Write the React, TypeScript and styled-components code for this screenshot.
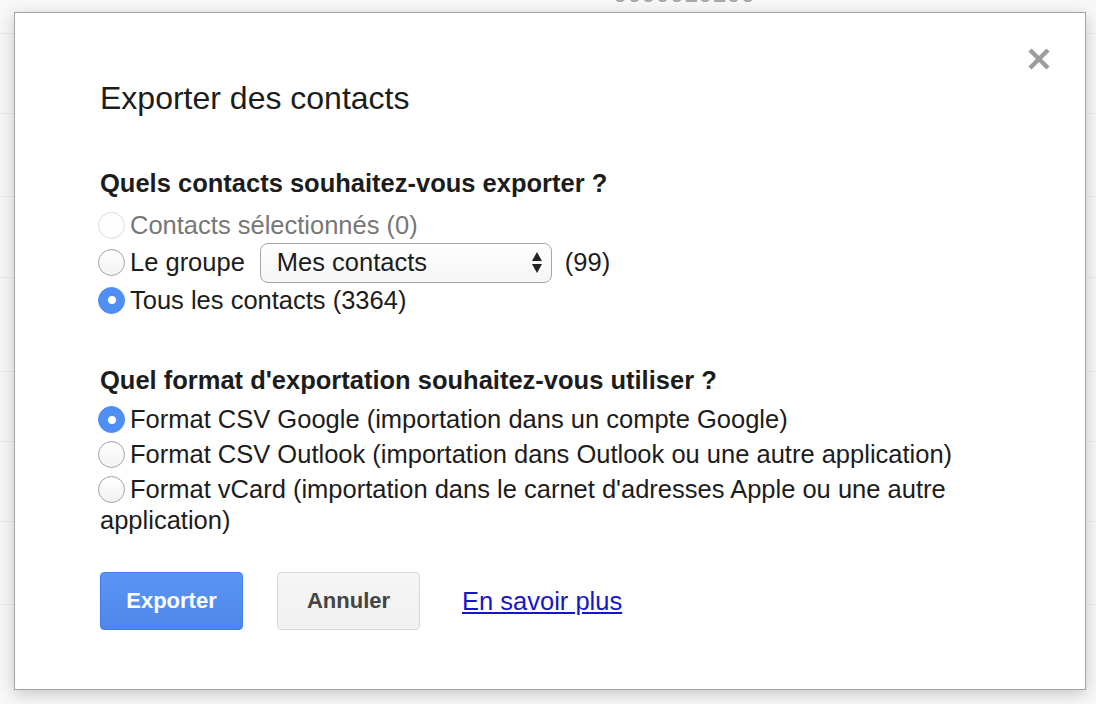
import React from "react";
import styled, {createGlobalStyle} from "styled-components";

const GlobalStyle = createGlobalStyle`
  html, body {
    margin: 0;
    padding: 0;
  }
  body {
    font-family: "Liberation Sans", Arial, Helvetica, sans-serif;
    background: #f8f8f8;
  }
`

// rows of the contact list that sits behind the modal
const behindRows = [
    {h: 80, text: "0000010100"},
    {h: 80}, {h: 83}, {h: 81}, {h: 94}, {h: 70}, {h: 80}, {h: 83}, {h: 140},
]

const groupOptions = [
    {key: "sel", label: "Contacts sélectionnés (0)", disabled: true},
    {key: "group", label: "Le groupe"},
    {key: "all", label: "Tous les contacts (3364)", checked: true},
]

const formatOptions = [
    {key: "google", label: "Format CSV Google (importation dans un compte Google)", checked: true},
    {key: "outlook", label: "Format CSV Outlook (importation dans Outlook ou une autre application)"},
    {key: "vcard", label: "Format vCard (importation dans le carnet d'adresses Apple ou une autre application)"},
]

export default function App() {
    return (
        <Page>
            <GlobalStyle/>
            <ListBehind>
                {behindRows.map((r, i) => (
                    <ListRow key={i} $h={r.h}>{r.text}</ListRow>
                ))}
            </ListBehind>

            <Dialog>
                <Close aria-label="Fermer">
                    <svg width="22" height="22" viewBox="0 0 22 22">
                        <path d="M2 2 L20 20 M20 2 L2 20" stroke="#9d9d9d" strokeWidth="4.5" fill="none"/>
                    </svg>
                </Close>

                <Title>Exporter des contacts</Title>

                <Heading>Quels contacts souhaitez-vous exporter ?</Heading>
                {groupOptions.map((o) => (
                    <Option key={o.key} $pad={6.5} $muted={o.disabled}>
                        <Radio $checked={o.checked} $disabled={o.disabled}/>
                        {o.label}
                        {o.key === "group" && (
                            <>
                                <Select>
                                    <span>Mes contacts</span>
                                    <svg width="10" height="21" viewBox="0 0 10 21">
                                        <polygon points="0,9 5,0 10,9" fill="#222"/>
                                        <polygon points="0,12 10,12 5,21" fill="#222"/>
                                    </svg>
                                </Select>
                                (99)
                            </>
                        )}
                    </Option>
                ))}

                <Heading $top={50.5}>Quel format d'exportation souhaitez-vous utiliser ?</Heading>
                {formatOptions.map((o) => (
                    <Option key={o.key} $pad={4}>
                        <Radio $checked={o.checked}/>
                        {o.label}
                    </Option>
                ))}

                <Actions>
                    <Button $primary>Exporter</Button>
                    <Button>Annuler</Button>
                    <MoreLink href="#">En savoir plus</MoreLink>
                </Actions>
            </Dialog>
        </Page>
    )
}

const Page = styled.div`
  position: relative;
  height: 704px;
  overflow: hidden;
  background: #f8f8f8;
`

const ListBehind = styled.div`
  margin-top: -46px;
  color: #a8a8a8;
  font-size: 25.5px;
  line-height: 29px;
`

const ListRow = styled.div<{ $h: number }>`
  height: ${p => p.$h}px;
  box-sizing: border-box;
  border-bottom: 1px solid #ebebeb;
  display: flex;
  align-items: center;
  padding-left: 613px;
`

const Dialog = styled.div`
  position: absolute;
  top: 12px;
  left: 14px;
  width: 1072px;
  box-sizing: border-box;
  padding: 65px 85px 59px;
  background: #fff;
  border: 1px solid #a3a3a3;
  box-shadow: 0 4px 16px rgba(0, 0, 0, 0.2);
  color: #1c1c1c;
`

const Close = styled.div`
  position: absolute;
  top: 35px;
  right: 35px;
  width: 22px;
  height: 22px;
  cursor: pointer;

  svg {
    display: block;
  }
`

const Title = styled.h2`
  margin: 0 0 51px;
  font-size: 32px;
  line-height: 40px;
  font-weight: normal;
`

const Heading = styled.h3<{ $top?: number }>`
  margin: ${p => p.$top || 0}px 0 5px;
  font-size: 25.5px;
  line-height: 29px;
  font-weight: bold;
`

const Option = styled.div<{ $pad: number; $muted?: boolean }>`
  padding-top: ${p => p.$pad}px;
  font-size: 25.5px;
  line-height: 31px;
  color: ${p => p.$muted ? "#777" : "#1c1c1c"};
`

const Radio = styled.span<{ $checked?: boolean; $disabled?: boolean }>`
  display: inline-block;
  position: relative;
  box-sizing: border-box;
  width: 27px;
  height: 27px;
  margin: 0 5px 0 -2px;
  vertical-align: -5px;
  border-radius: 50%;
  border: 1px solid ${p => p.$checked ? "#4a8cf0" : p.$disabled ? "#dcdcdc" : "#a2a2a2"};
  background: ${p => p.$checked ? "#4d8ff2" : p.$disabled ? "#fdfdfd" : "linear-gradient(#ffffff, #f2f2f2)"};

  &::after {
    content: "";
    display: ${p => p.$checked ? "block" : "none"};
    position: absolute;
    top: 50%;
    left: 50%;
    width: 8px;
    height: 8px;
    border-radius: 50%;
    background: #fff;
    transform: translate(-50%, -50%);
  }
`

const Select = styled.span`
  display: inline-flex;
  align-items: center;
  justify-content: space-between;
  box-sizing: border-box;
  width: 292px;
  height: 40px;
  margin: -6px 13px -6px 15px;
  padding: 0 9px 0 16px;
  border: 1px solid #a6a6a6;
  border-radius: 8px;
  background: linear-gradient(#ffffff, #f5f5f5);
  color: #1c1c1c;
  line-height: 29px;

  svg {
    display: block;
  }
`

const Actions = styled.div`
  display: flex;
  align-items: center;
  gap: 34px;
  margin-top: 36px;
`

const Button = styled.button<{ $primary?: boolean }>`
  box-sizing: border-box;
  height: 58px;
  min-width: 143px;
  padding: 0 20px;
  border-radius: 4px;
  border: 1px solid ${p => p.$primary ? "#3f7fe9" : "#d8d8d8"};
  background: ${p => p.$primary ? "linear-gradient(#5a95f5, #4f87e9)" : "linear-gradient(#f5f5f5, #f1f1f1)"};
  color: ${p => p.$primary ? "#fff" : "#444"};
  font-family: "Liberation Sans", Arial, Helvetica, sans-serif;
  font-size: 22px;
  font-weight: bold;
  cursor: pointer;
`

const MoreLink = styled.a`
  margin-left: 8px;
  font-size: 25.5px;
  line-height: 29px;
  color: #1515c9;
  text-decoration: underline;
`
